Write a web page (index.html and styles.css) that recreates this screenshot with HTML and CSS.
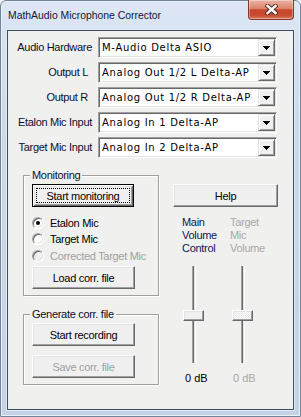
FILE: index.html
```html
<!DOCTYPE html>
<html lang="en">
<head>
    <meta charset="UTF-8">
    <meta name="viewport" content="width=device-width, initial-scale=1.0">
    <title>MathAudio Microphone Corrector</title>
    <link rel="stylesheet" href="styles.css">
</head>
<body>
    <div class="window">
        <div class="titlebar">
            <span class="title">MathAudio Microphone Corrector</span>
            <div class="close-btn">
                <svg width="13" height="11" viewBox="0 0 13 11">
                    <path d="M2.5 2 L10.5 9 M10.5 2 L2.5 9" stroke="#5a2f28" stroke-width="4.4" stroke-linecap="square" fill="none"/>
                    <path d="M2.5 2 L10.5 9 M10.5 2 L2.5 9" stroke="#ffffff" stroke-width="2.4" stroke-linecap="square" fill="none"/>
                </svg>
            </div>
        </div>
        <div class="client">
            <div class="settings">
                <div class="field-label">Audio Hardware</div>
                <div class="combo">
                    <span class="combo-text">M-Audio Delta ASIO</span>
                    <span class="combo-arrow"><svg width="7" height="4" viewBox="0 0 7 4"><path d="M0 0h7v1h-7z M1 1h5v1h-5z M2 2h3v1h-3z M3 3h1v1h-1z" fill="#000"/></svg></span>
                </div>
                <div class="field-label field-label-short">Output L</div>
                <div class="combo">
                    <span class="combo-text">Analog Out 1/2 L Delta-AP</span>
                    <span class="combo-arrow"><svg width="7" height="4" viewBox="0 0 7 4"><path d="M0 0h7v1h-7z M1 1h5v1h-5z M2 2h3v1h-3z M3 3h1v1h-1z" fill="#000"/></svg></span>
                </div>
                <div class="field-label field-label-short">Output R</div>
                <div class="combo">
                    <span class="combo-text">Analog Out 1/2 R Delta-AP</span>
                    <span class="combo-arrow"><svg width="7" height="4" viewBox="0 0 7 4"><path d="M0 0h7v1h-7z M1 1h5v1h-5z M2 2h3v1h-3z M3 3h1v1h-1z" fill="#000"/></svg></span>
                </div>
                <div class="field-label">Etalon Mic Input</div>
                <div class="combo">
                    <span class="combo-text">Analog In 1 Delta-AP</span>
                    <span class="combo-arrow"><svg width="7" height="4" viewBox="0 0 7 4"><path d="M0 0h7v1h-7z M1 1h5v1h-5z M2 2h3v1h-3z M3 3h1v1h-1z" fill="#000"/></svg></span>
                </div>
                <div class="field-label">Target Mic Input</div>
                <div class="combo">
                    <span class="combo-text">Analog In 2 Delta-AP</span>
                    <span class="combo-arrow"><svg width="7" height="4" viewBox="0 0 7 4"><path d="M0 0h7v1h-7z M1 1h5v1h-5z M2 2h3v1h-3z M3 3h1v1h-1z" fill="#000"/></svg></span>
                </div>
            </div>

            <div class="lower">
                <div class="groups">
                    <div class="group">
                        <div class="group-title">Monitoring</div>
                        <div class="btn btn-default">Start monitoring</div>
                        <div class="radios">
                            <div class="radio checked"><span class="radio-dot"></span>Etalon Mic</div>
                            <div class="radio"><span class="radio-dot"></span>Target Mic</div>
                            <div class="radio disabled"><span class="radio-dot"></span>Corrected Target Mic</div>
                        </div>
                        <div class="btn btn-load">Load corr. file</div>
                    </div>
                    <div class="group group-generate">
                        <div class="group-title">Generate corr. file</div>
                        <div class="btn">Start recording</div>
                        <div class="btn btn-save disabled">Save corr. file</div>
                    </div>
                </div>

                <div class="side">
                    <div class="btn btn-help">Help</div>
                    <div class="volumes">
                        <div class="volume">
                            <div class="volume-title">Main<br>Volume<br>Control</div>
                            <div class="slider">
                                <div class="slider-track"></div>
                                <div class="slider-thumb"></div>
                            </div>
                            <div class="volume-value">0 dB</div>
                        </div>
                        <div class="volume disabled">
                            <div class="volume-title">Target<br>Mic<br>Volume</div>
                            <div class="slider">
                                <div class="slider-track"></div>
                                <div class="slider-thumb"></div>
                            </div>
                            <div class="volume-value">0 dB</div>
                        </div>
                    </div>
                </div>
            </div>
        </div>
    </div>
</body>
</html>
```

FILE: styles.css
```css
body {
    margin: 0;
    font-family: "Liberation Sans", Arial, sans-serif;
    font-size: 11px;
    color: #000;
}
.window {
    width: 301px;
    height: 417px;
    box-sizing: border-box;
    border: 1px solid #71849b;
    border-radius: 6px 6px 0 0;
    padding: 0 6px 6px;
    display: flex;
    flex-direction: column;
    background: linear-gradient(#dde7f5, #cbd9ea 30%, #c3d2e5);
    box-shadow: inset 0 0 0 1px #e9f0f8;
}
.titlebar {
    height: 29px;
    flex-shrink: 0;
    display: flex;
    align-items: center;
}
.title {
    padding-left: 1px;
    font-size: 10.4px;
    color: #14143c;
}
.close-btn {
    margin-left: auto;
    align-self: flex-start;
    margin-top: -1px;
    width: 46px;
    height: 20px;
    box-sizing: border-box;
    border: 1px solid #82382c;
    border-top: none;
    border-radius: 0 0 4px 4px;
    background: linear-gradient(#ebb4a6, #de826b 45%, #c9452c 52%, #c64a30 80%, #d77a60);
    box-shadow: inset 0 0 0 1px rgba(255, 255, 255, 0.35);
    display: flex;
    align-items: center;
    justify-content: center;
}
.client {
    flex: 1;
    border: 1px solid #3e4c5d;
    background: #f0f0ee;
    box-shadow: 0 0 0 1px #e3ebf5;
}

/* device rows */
.settings {
    display: grid;
    grid-template-columns: 85px 179px;
    grid-auto-rows: 21px;
    column-gap: 5px;
    row-gap: 4px;
    padding-top: 6px;
}
.field-label {
    text-align: right;
    align-self: center;
    margin-top: -2px;
    padding-right: 1px;
    letter-spacing: -0.3px;
    white-space: nowrap;
    color: #0a0f2e;
}
.field-label-short {
    padding-right: 5px;
}
.combo {
    box-sizing: border-box;
    height: 21px;
    padding: 1px;
    display: flex;
    align-items: center;
    background: #fff;
    border: 1px solid;
    border-color: #a0a0a0 #fff #fff #a0a0a0;
    box-shadow: inset 1px 1px #696969, inset -1px -1px #e3e3e3;
}
.combo-text {
    flex: 1;
    padding-left: 2px;
    font-family: "DejaVu Sans", Verdana, sans-serif;
    font-size: 10px;
    letter-spacing: 0.7px;
    white-space: nowrap;
    overflow: hidden;
}
.combo-arrow {
    width: 17px;
    height: 17px;
    box-sizing: border-box;
    padding-top: 6px;
    display: flex;
    justify-content: center;
    align-items: flex-start;
    background: #f0f0f0;
    border: 1px solid;
    border-color: #e3e3e3 #696969 #696969 #e3e3e3;
    box-shadow: inset 1px 1px #fff, inset -1px -1px #a0a0a0;
}
.combo-arrow svg {
    display: block;
}

/* lower part */
.lower {
    display: flex;
    align-items: flex-start;
    margin-top: 17px;
    padding-left: 15px;
}
.groups {
    width: 136px;
}
.group {
    border: 1px solid #a0a0a0;
    box-shadow: inset 1px 1px #fff, 1px 1px #fff;
    padding: 0 6px 6px 8px;
}
.group-generate {
    margin-top: 18px;
}
.group-title {
    width: fit-content;
    margin: -7px 0 0 -2px;
    padding: 0 2px;
    line-height: 13px;
    background: #f0f0ee;
    letter-spacing: -0.3px;
    white-space: nowrap;
    color: #0a0f2e;
}
.group-title + .btn {
    margin-top: 2px;
}
.btn {
    width: 103px;
    height: 23px;
    box-sizing: border-box;
    display: flex;
    align-items: center;
    justify-content: center;
    background: #f0f0f0;
    border: 1px solid;
    border-color: #fff #696969 #696969 #fff;
    box-shadow: inset -1px -1px #a0a0a0, inset 1px 1px #e3e3e3;
    letter-spacing: -0.3px;
    white-space: nowrap;
}
.btn-default {
    position: relative;
    width: 102px;
    border-color: #000;
    box-shadow: inset 1px 1px #fff, inset -1px -1px #696969, inset 2px 2px #e3e3e3, inset -2px -2px #a0a0a0;
}
.btn-default::after {
    content: "";
    position: absolute;
    inset: 3px;
    border: 1px dotted #000;
}
.btn-load {
    margin-top: 2px;
}
.btn-save {
    margin-top: 9px;
}
.btn.disabled {
    color: #a0a0a0;
}
.radios {
    margin-top: 8px;
}
.radio {
    height: 16px;
    display: flex;
    align-items: center;
    white-space: nowrap;
    letter-spacing: -0.3px;
}
.radio:last-child {
    height: 17px;
}
.radio-dot {
    width: 12px;
    height: 12px;
    box-sizing: border-box;
    flex-shrink: 0;
    margin-right: 6px;
    border-radius: 50%;
    border: 1px solid;
    border-color: #a0a0a0 #fff #fff #a0a0a0;
    box-shadow: inset 1px 1px #696969, inset -1px -1px #e3e3e3;
    background: #fff;
    display: flex;
    align-items: center;
    justify-content: center;
}
.radio.checked .radio-dot::after {
    content: "";
    width: 4px;
    height: 4px;
    border-radius: 50%;
    background: #000;
}
.radio.disabled {
    color: #a0a0a0;
}
.radio.disabled .radio-dot {
    background: #f0f0f0;
}

/* help + volume sliders */
.side {
    width: 105px;
    margin-left: 14px;
    padding-top: 9px;
}
.btn-help {
    width: 105px;
}
.volumes {
    display: flex;
    margin: 9px 0 0 9px;
}
.volume {
    width: 51px;
}
.volume-title {
    line-height: 13px;
    letter-spacing: -0.3px;
    color: #0e1650;
}
.volume.disabled .volume-title,
.volume.disabled .volume-value {
    color: #a8a8a8;
}
.slider {
    position: relative;
    width: 21px;
    height: 97px;
    margin: 11px 0 0 1px;
    padding-left: 9px;
    box-sizing: border-box;
}
.volume.disabled .slider {
    margin-left: 2px;
}
.slider-track {
    width: 2px;
    height: 100%;
    border-left: 1px solid #a0a0a0;
    border-right: 1px solid #fff;
    background: linear-gradient(to right, #696969 50%, #e3e3e3 50%);
}
.slider-thumb {
    position: absolute;
    left: 0;
    top: 44px;
    width: 21px;
    height: 11px;
    box-sizing: border-box;
    background: #f0f0f0;
    border: 1px solid;
    border-color: #fff #696969 #696969 #fff;
    box-shadow: inset -1px -1px #a0a0a0, inset 1px 1px #e3e3e3;
}
.volume.disabled .slider-thumb {
    background: repeating-conic-gradient(#fff 0 25%, #e6e6e6 0 50%) 0 0 / 2px 2px;
}
.volume-value {
    margin-top: 9px;
    line-height: 13px;
    padding-left: 3px;
}
```
